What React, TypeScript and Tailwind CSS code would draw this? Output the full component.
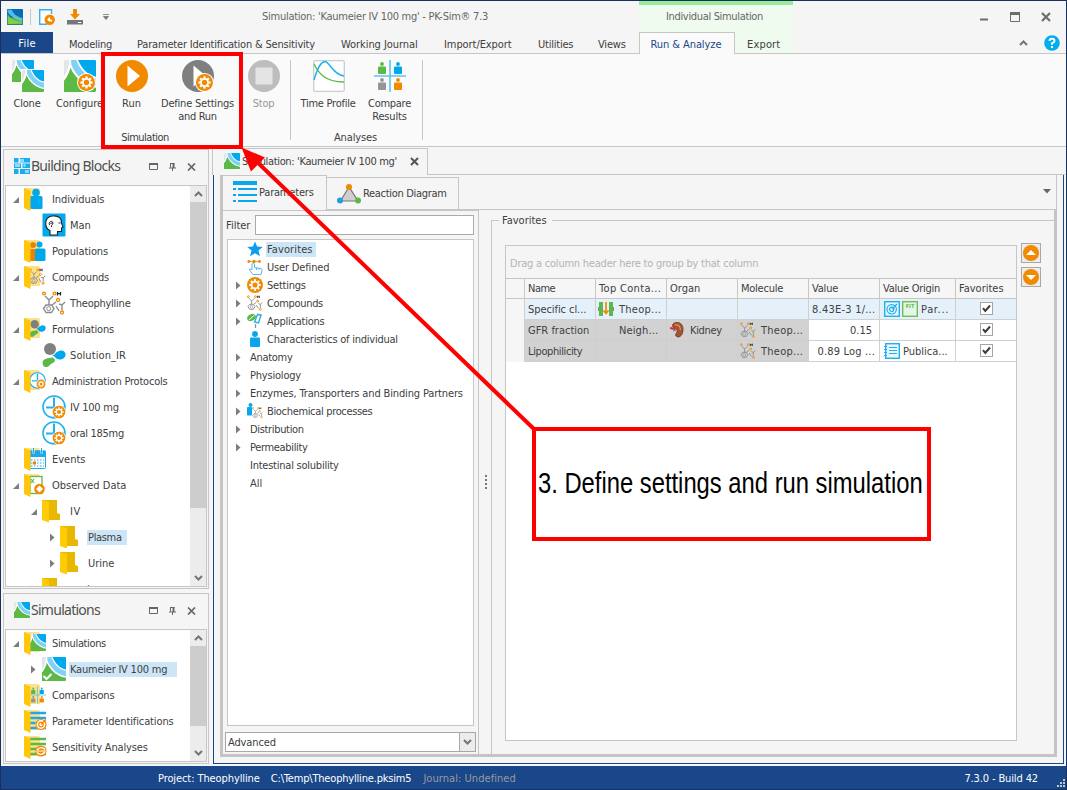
import { useLayoutEffect, useRef, type ReactNode } from "react";

/* Text that is tracked in or out so that it takes exactly `w` pixels. */
function T({ w, children, className = "" }: { w?: number; children: string; className?: string }) {
  const ref = useRef<HTMLSpanElement>(null);
  useLayoutEffect(() => {
    const el = ref.current;
    if (!el || !w) return;
    el.style.letterSpacing = "0px";
    const natural = el.offsetWidth;
    el.style.letterSpacing = `${(w - natural) / children.length}px`;
  }, [w, children]);
  return (
    <span ref={ref} className={`inline-block whitespace-nowrap ${className}`}>
      {children}
    </span>
  );
}

type P = { s?: number };

function Gear({ cx, cy, r }: { cx: number; cy: number; r: number }) {
  return (
    <g transform={`translate(${cx} ${cy}) scale(${r / 10})`}>
      <circle r="10" fill="#f18a00" />
      <circle r="4.2" fill="none" stroke="#fff" strokeWidth="2" />
      {[0, 45, 90, 135, 180, 225, 270, 315].map((a) => (
        <rect key={a} x="-1.3" y="-7.2" width="2.6" height="3" fill="#fff" transform={`rotate(${a})`} />
      ))}
    </g>
  );
}

function WaveShape() {
  return (
    <>
      <rect width="24" height="24" rx="1" fill="#fff" />
      <path d="M0 1Q0 0 1 0H4C3.800 4 2.500 9 0 12.500Z" fill="#e3e6e8" />
      <path d="M10.500 0H23Q24 0 24 1V12.500C18 11.500 13.500 7 10.500 0Z" fill="#00a9ee" />
      <path d="M5.200 0H9.200C12 7.500 17 12.500 24 13.800V19.300C16 18 9 12 5.600 4Z" fill="#80d0f7" />
      <path d="M0 24V15.500C2.500 12.500 4 9.500 4.800 5.800C9 14.500 16 19.800 24 20.800V23Q24 24 23 24Z" fill="#5cb946" />
    </>
  );
}

const SimIcon = ({ s = 24 }: P) => (
  <svg width={s} height={s} viewBox="0 0 24 24"><WaveShape /></svg>
);
const SimCheck = ({ s = 24 }: P) => (
  <svg width={s} height={s} viewBox="0 0 24 24"><WaveShape /><path d="M1.500 19L4.500 22L9.500 17" fill="none" stroke="#fff" strokeWidth="2" /></svg>
);
const AppIcon = () => (
  <svg width="16" height="16" viewBox="0 0 24 24">
    <rect width="24" height="24" rx="1" fill="#0a6cae" />
    <path d="M1 1H7C11 9 16 12 23 13V18C12 17 5 10 1 5Z" fill="#4cbdf0" />
    <path d="M1 7C4 14 12 18 23 19V23H1Z" fill="#6cc83c" />
    <path d="M1 12C5 14 9 14 12 11L23 16V20Q12 22 1 23Z" fill="#8fd650" opacity=".55" />
  </svg>
);
const CloneIcon = () => (
  <svg width="32" height="32" viewBox="0 0 32 32">
    <svg width="22" height="22" viewBox="0 0 24 24"><WaveShape /></svg>
    <rect x="9" y="9" width="23" height="23" fill="#fff" />
    <svg x="10" y="10" width="22" height="22" viewBox="0 0 24 24"><WaveShape /></svg>
  </svg>
);
const ConfigureIcon = () => (
  <svg width="32" height="32" viewBox="0 0 32 32">
    <svg width="32" height="32" viewBox="0 0 24 24"><WaveShape /></svg>
    <circle cx="22.500" cy="22.500" r="9.500" fill="#fff" />
    <Gear cx={22.5} cy={22.5} r={8.5} />
  </svg>
);
const RunIcon = () => (
  <svg width="32" height="32" viewBox="0 0 32 32">
    <circle cx="16" cy="16" r="16" fill="#f18a00" /><path d="M11.500 5.500L24 16L11.500 26.500Z" fill="#fff" />
  </svg>
);
const DefineRunIcon = () => (
  <svg width="32" height="32" viewBox="0 0 32 32">
    <circle cx="16" cy="16" r="16" fill="#7f7f7f" /><path d="M11.500 5.500L24 16L11.500 26.500Z" fill="#fff" />
    <circle cx="22.500" cy="22.500" r="9.500" fill="#fff" />
    <Gear cx={22.5} cy={22.5} r={8.5} />
  </svg>
);
const StopIcon = () => (
  <svg width="32" height="32" viewBox="0 0 32 32">
    <circle cx="16" cy="16" r="16" fill="#bdbdbd" /><rect x="7.500" y="7.500" width="17" height="17" rx="1" fill="#e4e4e4" stroke="#d2d2d2" />
  </svg>
);
const ProfileIcon = () => (
  <svg width="32" height="32" viewBox="0 0 32 32" fill="none">
    <rect x=".7" y=".7" width="30.600" height="30.600" rx="1.500" fill="#fff" stroke="#c9cdd1" strokeWidth="1.300" />
    <path d="M1 4C5 12 11 22 31 22" stroke="#5cb946" strokeWidth="1.400" />
    <path d="M1 20C4 10 7 2 12 1.500C17 2 19 14 31 16" stroke="#1fb0ee" strokeWidth="1.400" />
  </svg>
);
function Person({ x, y, c }: { x: number; y: number; c: string }) {
  return (
    <g transform={`translate(${x} ${y})`} fill={c}>
      <circle cx="4" cy="2" r="1.900" /><rect x="0" y="4.500" width="8" height="7.500" rx="1" />
    </g>
  );
}
function ComparePeople() {
  return (
    <>
      <Person x={4} y={2} c="#5cb946" /><Person x={20} y={2} c="#00a9ee" />
      <Person x={4} y={18} c="#939598" /><Person x={20} y={18} c="#f18a00" />
      <path d="M16 0V32M0 16H32" stroke="#5cc5f2" strokeWidth="1.600" />
    </>
  );
}
const CompareIcon = () => <svg width="32" height="32" viewBox="0 0 32 32"><ComparePeople /></svg>;

const ManIcon = () => (
  <svg width="24" height="24" viewBox="0 0 24 24">
    <rect x=".5" y=".5" width="23" height="23" rx="1" fill="#00a9ee" />
    <path d="M8 22V17.500C2 15 2 4 10 3C17 2 20 6 19.500 10L21 14L19.500 15V18.500H15.500V22Z" fill="#fff" stroke="#222" strokeWidth="1.100" />
    <path d="M7.500 12C6 8.500 10.500 7 11 10C11 12 9 11.500 9.500 14M8.500 10.500L10 10M16.500 10H18.500" fill="none" stroke="#222" strokeWidth="1" />
  </svg>
);
function Mol() {
  return (
    <>
      <g fill="none" stroke="#8d8d8d" strokeWidth="1.400">
        <path d="M3 5L7 9L11 5M7 9V14M1.500 17.500L4 14H9.500L12 17.500L9.500 21.500H4Z" />
        <circle cx="6.700" cy="17.700" r="2" strokeWidth="1" />
        <path d="M10 14L14 11M17 13L20 14L23 11M20 14V19M14 15L17 20" />
      </g>
      <g fill="none" stroke="#f18a00" strokeWidth="1.300"><circle cx="2" cy="2.500" r="1.400" /><circle cx="12.500" cy="2.500" r="1.400" /><circle cx="16" cy="9" r="1.500" /><circle cx="20" cy="21.500" r="1.500" /></g>
      <path d="M15.500 1V4.500M18.500 1V4.500M15.500 2.700H18.500" stroke="#222" strokeWidth="1.200" />
    </>
  );
}
const MolIcon = ({ s = 24 }: P) => <svg width={s} height={s} viewBox="0 0 24 24" className="shrink-0"><Mol /></svg>;

function Pill() {
  return (
    <>
      <circle cx="8" cy="6" r="6" fill="#7f7f7f" />
      <path d="M10 12C13 13 13 9 17 8C22 6 26 11 22 15C18 18 14 16 13 14Z" fill="#00a9ee" />
      <path d="M1 22C-1 17 4 15 8 15C11 14 12 15 13 17C13 20 9 20 7 23C4 25 2 24 1 22Z" fill="#5cb946" />
    </>
  );
}
function Clock() {
  return (
    <>
      <circle cx="12" cy="12" r="11" fill="#fff" stroke="#1fb0ee" strokeWidth="1.600" />
      <path d="M12 2.500V12.500H4" fill="none" stroke="#1fb0ee" strokeWidth="2" />
      <path d="M12 20V22M20 12H22" stroke="#1fb0ee" strokeWidth="1.500" />
      <circle cx="17" cy="17" r="7" fill="#fff" /><Gear cx={17} cy={17} r={6.3} />
    </>
  );
}
const PillIcon = () => <svg width="24" height="24" viewBox="0 0 24 24"><Pill /></svg>;
const ClockIcon = () => <svg width="24" height="24" viewBox="0 0 24 24"><Clock /></svg>;

/* Open yellow folder that shows a smaller drawing in front of its back page. */
function Folder({ children }: { children: ReactNode }) {
  return (
    <svg width="24" height="24" viewBox="0 0 24 24" className="overflow-visible">
      <path d="M0 1H14Q16 1 16 3V21H0Z" fill="#ffe08a" />
      {children}
      <path d="M0 1L6.500 3.500V24L0 21Z" fill="#ffc60a" />
    </svg>
  );
}
const Inner = ({ children }: { children: ReactNode }) => (
  <svg x="5" y="2.500" width="17" height="18" viewBox="0 0 24 24" overflow="visible">{children}</svg>
);
const PlainFolder = () => (
  <svg width="24" height="24" viewBox="0 0 24 24">
    <path d="M0 1H15V14L18 15V21H0Z" fill="#e8b800" /><path d="M0 1L7 3V23.500L0 21Z" fill="#ffcb05" />
  </svg>
);
const FIndividual = () => <Folder><circle cx="12" cy="5.500" r="3.800" fill="#00a9ee" /><rect x="6" y="9" width="12.500" height="13" rx="1.500" fill="#00a9ee" /></Folder>;
const FPopulation = () => (
  <Folder>
    <circle cx="9" cy="6" r="3" fill="#f08000" /><rect x="5" y="10" width="7" height="12" fill="#f08000" />
    <circle cx="15.500" cy="5.500" r="3" fill="#00a9ee" /><rect x="11" y="9.500" width="10.500" height="12.500" rx="1.500" fill="#00a9ee" />
  </Folder>
);
const FCompound = () => <Folder><Inner><Mol /></Inner></Folder>;
const FFormulation = () => <Folder><Inner><Pill /></Inner></Folder>;
const FProtocol = () => <Folder><Inner><Clock /></Inner></Folder>;
const FEvent = () => (
  <Folder>
    <rect x="6" y="4" width="15.500" height="17.500" rx="1" fill="#fff" stroke="#1fa8e8" />
    <path d="M6 3.500H21.500V10H6Z" fill="#1fa8e8" /><path d="M9.500 2V6.500M17.500 2V6.500" stroke="#fff" strokeWidth="2" /><path d="M9.500 1V6M17.500 1V6" stroke="#1fa8e8" />
    <path d="M7 13H20M7 16H20M7 19H20" stroke="#6cc8f2" strokeWidth="1.500" strokeDasharray="1.500 1.500" /><rect x="9" y="14.500" width="3" height="3" fill="#f08000" />
  </Folder>
);
function Observed() {
  return (
    <>
      <rect x="6" y="3.500" width="12" height="17" fill="#fff" stroke="#5cb946" strokeWidth="1.300" />
      <path d="M7 6L10 10M10 6L7 10" stroke="#5cb946" strokeWidth="1.200" />
      <circle cx="15.500" cy="16" r="5.300" fill="#f18a00" />
      <path d="M15.500 12.500L19 16L15.500 19.500L12 16Z" fill="#fff" />
    </>
  );
}
const FObserved = () => <Folder><Observed /></Folder>;
const FSim = () => <Folder><Inner><WaveShape /></Inner></Folder>;
const FCompare = () => (
  <Folder><svg x="5" y="3" width="17" height="18" viewBox="0 0 32 32"><ComparePeople /></svg></Folder>
);
function Lines({ c }: { c: string }) {
  return <path d="M6 4H22M6 9H22M6 14H22M6 19H22" stroke={c} strokeWidth="2.600" />;
}
const FIdent = () => (
  <Folder>
    <Lines c="#1fa8e8" /><circle cx="17" cy="15.500" r="5.600" fill="#fff" />
    <g fill="none" stroke="#f18a00" strokeWidth="1.200"><circle cx="17" cy="15.500" r="5" /><circle cx="17" cy="15.500" r="2.300" /><path d="M17 15.500L22 10.500" /></g>
  </Folder>
);
const FSens = () => (
  <Folder>
    <Lines c="#5cb946" /><circle cx="17" cy="16" r="5.600" fill="#f18a00" />
    <path d="M13 15Q17 10.500 21 14.500M13 17.500Q17 21.500 21 17" fill="none" stroke="#fff" strokeWidth="1.400" /><path d="M12 16H22" stroke="#fff" />
  </Folder>
);
const BlocksIcon = () => (
  <svg width="16" height="16" viewBox="0 0 16 16">
    <g fill="#16aeef"><rect width="4.500" height="4.500" /><rect x="6" width="10" height="4.500" /><rect y="5.500" width="7" height="4.500" /><rect x="8.500" y="5.500" width="7.500" height="4.500" /><rect y="11" width="4.500" height="5" /><rect x="6" y="11" width="10" height="5" /></g>
    <g fill="#8fdafa"><rect x="6" y="1" width="4" height="3" /><rect x="1" y="6" width="5" height="3" /><rect x="9.500" y="6" width="2" height="3" /><rect x="11" y="12" width="4" height="3" /></g>
  </svg>
);
const ParamIcon = () => (
  <svg width="24" height="24" viewBox="0 0 24 24" className="shrink-0">
    <path d="M0 1H24V5H0ZM5 8H24V10H5ZM5 14H24V16H5ZM5 20H24V22H5ZM0 8H3V10H0ZM0 14H3V16H0ZM0 20H3V22H0Z" fill="#0aa6ec" />
  </svg>
);
const DiagramIcon = () => (
  <svg width="24" height="24" viewBox="0 0 24 24" className="shrink-0">
    <path d="M12 5L3.500 19H21Z" fill="#cfcfcf" stroke="#777" strokeWidth="1.200" />
    <circle cx="12" cy="5" r="3" fill="#f18a00" /><circle cx="3" cy="18.500" r="3" fill="#1f9fe0" /><circle cx="21" cy="18.500" r="3" fill="#5cb946" />
  </svg>
);
const Star = () => <svg width="16" height="16" viewBox="0 0 16 16"><path d="M8 .5L10.100 5.500L15.800 6L11.500 9.600L12.900 15.200L8 12.200L3.100 15.200L4.500 9.600L.2 6L5.900 5.500Z" fill="#0f9fe8" /></svg>;
const Hand = () => (
  <svg width="16" height="16" viewBox="0 0 16 16" fill="none">
    <path d="M1 2.500H13" stroke="#f3a850" strokeWidth="1.200" /><g fill="#f18a00"><circle cx="1.800" cy="2.500" r="1.400" /><circle cx="7" cy="2.500" r="1.700" /><circle cx="12.500" cy="2.500" r="1.400" /></g>
    <path d="M6 15.500L2.500 11Q2 9 5 10.500V5Q6.500 3.500 7.500 5V8.500L14 9.500Q15.500 10 15 12L14 15.500Z" fill="#fff" stroke="#55bdf0" /><path d="M9.500 9V11M12 9.500V11" stroke="#55bdf0" />
  </svg>
);
const GearIcon = () => <svg width="16" height="16" viewBox="0 0 16 16"><Gear cx={8} cy={8} r={8} /></svg>;
const AppsIcon = () => (
  <svg width="16" height="16" viewBox="0 0 16 16">
    <ellipse cx="4.500" cy="4.500" rx="4.500" ry="3.200" fill="#5cb946" transform="rotate(-25 4.500 4.500)" /><path d="M2 7L7.500 2" stroke="#fff" />
    <path d="M10.500 1.500L14 2L11.500 10L7.500 9Z" fill="#fff" stroke="#1fb0ee" strokeWidth="1.400" /><path d="M8.500 11V15M10.500 1L14.500 2.500" stroke="#8d9499" strokeWidth="1.300" />
  </svg>
);
const PersonIcon = () => <svg width="16" height="16" viewBox="0 0 16 16" fill="#0aa6ec"><circle cx="8" cy="3" r="2.900" /><rect x="3" y="6.500" width="10" height="9.500" rx="1" /></svg>;
const BioIcon = () => (
  <svg width="16" height="16" viewBox="0 0 16 16">
    <circle cx="3.500" cy="2" r="2" fill="#0aa6ec" /><rect x="0" y="4" width="5" height="8.500" rx=".8" fill="#0aa6ec" />
    <svg x="5" y="4" width="11.500" height="11.500" viewBox="0 0 24 24"><Mol /></svg>
  </svg>
);
const TransportIcon = () => (
  <svg width="16" height="16" viewBox="0 0 16 16" className="shrink-0">
    <path d="M0 6H16V10H0Z" fill="#8a8a8a" /><path d="M1 1H5V6L4 8L5 10V15H1ZM11 1H15V15H11V10L12 8L11 6Z" fill="#5cb946" /><rect x="5" y="1" width="6" height="14" fill="#e6f2fc" />
    <path d="M8 1V12M5.500 9.500L8 12.500L10.500 9.500" fill="none" stroke="#f18a00" strokeWidth="1.700" />
  </svg>
);
const Kidney = () => (
  <svg width="16" height="16" viewBox="0 0 16 16" className="shrink-0">
    <path d="M3 2C6-1 13 0 13 7C13 13 10 16 6.500 14.500C4 13 8 10 7 8C6 6 1 6 3 2Z" fill="#a55430" stroke="#713014" strokeWidth=".8" /><path d="M5 3Q10 2 10.500 8" fill="none" stroke="#d59070" strokeWidth="1.300" />
    <path d="M0 6L5 7" stroke="#e22" strokeWidth="2" /><path d="M3 9L6 8" stroke="#5577cc" />
  </svg>
);
const TargetIcon = () => (
  <svg width="16" height="16" viewBox="0 0 16 16" className="shrink-0" fill="none" stroke="#1fb0ee">
    <rect x=".7" y=".7" width="14.600" height="14.600" fill="#e8f6fd" strokeWidth="1.400" /><circle cx="7.700" cy="8.300" r="4.700" strokeWidth="1.200" /><circle cx="7.700" cy="8.300" r="2.200" strokeWidth="1.200" /><path d="M8 8L13 3" strokeWidth="1.200" />
  </svg>
);
const FitIcon = () => (
  <svg width="16" height="16" viewBox="0 0 16 16" className="shrink-0">
    <rect x=".7" y=".7" width="14.600" height="14.600" fill="#e6f6e4" stroke="#6cc05a" strokeWidth="1.400" />
    <text x="8" y="6.800" fontSize="5" fontWeight="bold" fill="#5cb946" textAnchor="middle" fontFamily="DejaVu Sans">FIT</text>
  </svg>
);
const BookIcon = () => (
  <svg width="16" height="16" viewBox="0 0 16 16" className="shrink-0" fill="none" stroke="#1fb0ee">
    <rect x="1.700" y=".7" width="13.600" height="14.600" fill="#e8f6fd" strokeWidth="1.400" /><path d="M5 4.500H13M5 7.500H13M5 10.500H13M0 3.500H3M0 6.500H3M0 9.500H3M0 12.500H3" strokeWidth="1.100" />
  </svg>
);
const Check = () => (
  <svg width="13" height="13" viewBox="0 0 13 13" className="-mt-px"><rect x=".5" y=".5" width="12" height="12" fill="#fff" stroke="#a5a5a5" /><path d="M3 6.200L5.300 9L10 3.500" fill="none" stroke="#3c3c3c" strokeWidth="2" /></svg>
);

function Twisty({ state }: { state?: "open" | "closed" }) {
  return (
    <span className="w-[11px] shrink-0">
      {state === "open" && <svg width="7" height="7" viewBox="0 0 7 7" className="mt-[3px]"><path d="M6 0V6H0Z" fill="#7d7d7d" /></svg>}
      {state === "closed" && <svg width="5" height="9" viewBox="0 0 5 9" className="mt-px"><path d="M0 .5L4.500 4.500L0 8.500Z" fill="#7d7d7d" /></svg>}
    </span>
  );
}

type Node = { t: string; w: number; lv: 0 | 1 | 2; Icon: () => ReactNode; st?: "open" | "closed"; hl?: number };
const SimNode = () => <SimCheck />;
const MolNode = () => <MolIcon />;
const blocks: Node[] = [
  { t: "Individuals", w: 52, lv: 0, Icon: FIndividual, st: "open" },
  { t: "Man", w: 21, lv: 1, Icon: ManIcon },
  { t: "Populations", w: 56, lv: 0, Icon: FPopulation },
  { t: "Compounds", w: 57, lv: 0, Icon: FCompound, st: "open" },
  { t: "Theophylline", w: 61, lv: 1, Icon: MolNode },
  { t: "Formulations", w: 62, lv: 0, Icon: FFormulation, st: "open" },
  { t: "Solution_IR", w: 56, lv: 1, Icon: PillIcon },
  { t: "Administration Protocols", w: 116, lv: 0, Icon: FProtocol, st: "open" },
  { t: "IV 100 mg", w: 49, lv: 1, Icon: ClockIcon },
  { t: "oral 185mg", w: 54, lv: 1, Icon: ClockIcon },
  { t: "Events", w: 34, lv: 0, Icon: FEvent },
  { t: "Observed Data", w: 74, lv: 0, Icon: FObserved, st: "open" },
  { t: "IV", w: 11, lv: 1, Icon: PlainFolder, st: "open" },
  { t: "Plasma", w: 34, lv: 2, Icon: PlainFolder, st: "closed", hl: 40 },
  { t: "Urine", w: 26, lv: 2, Icon: PlainFolder, st: "closed" },
  { t: "oral", w: 20, lv: 1, Icon: PlainFolder, st: "closed" },
];
const sims: Node[] = [
  { t: "Simulations", w: 54, lv: 0, Icon: FSim, st: "open" },
  { t: "Kaumeier IV 100 mg", w: 97, lv: 1, Icon: SimNode, st: "closed", hl: 108 },
  { t: "Comparisons", w: 62, lv: 0, Icon: FCompare },
  { t: "Parameter Identifications", w: 122, lv: 0, Icon: FIdent },
  { t: "Sensitivity Analyses", w: 96, lv: 0, Icon: FSens },
];
const indent = ["pl-[7px]", "pl-[25px]", "pl-[44px]"];

function Tree({ nodes }: { nodes: Node[] }) {
  return (
    <div className="min-w-0 flex-1 overflow-hidden bg-white">
      {nodes.map((n, i) => (
        <div key={i} className={`flex h-[26px] items-center ${indent[n.lv]}`}>
          <Twisty state={n.st} />
          <span className={n.lv === 2 ? "-ml-px w-6 shrink-0" : "w-6 shrink-0"}><n.Icon /></span>
          <span className={`ml-[3px] flex h-[15px] shrink-0 items-center pl-px ${n.hl ? "bg-[#cde6f7]" : ""}`} style={n.hl ? { width: n.hl } : undefined}>
            <T w={n.w}>{n.t}</T>
          </span>
        </div>
      ))}
    </div>
  );
}

const Chev = ({ up = false }: { up?: boolean }) => (
  <svg width="9" height="6" viewBox="0 0 9 6"><path d={up ? "M1 5L4.500 1.500L8 5" : "M1 1L4.500 4.500L8 1"} fill="none" stroke="#757575" strokeWidth="2" /></svg>
);

function ScrollBar({ thumb }: { thumb: string }) {
  return (
    <div className="flex w-4 shrink-0 flex-col bg-[#ececec]">
      <div className="flex h-4 items-center justify-center"><Chev up /></div>
      <div className={`bg-[#cdcdcd] ${thumb}`} />
      <div className="mt-auto flex h-4 items-center justify-center"><Chev /></div>
    </div>
  );
}

function Panel({ title, w, icon, nodes, className, thumb }: { title: string; w: number; icon: ReactNode; nodes: Node[]; className: string; thumb: string }) {
  return (
    <section className={`flex w-[206px] flex-col border border-[#c6c6c6] px-px pb-px ${className}`}>
      <header className="flex h-[35px] shrink-0 items-center pb-[3px] pl-[9px]">
        {icon}
        <T w={w} className="ml-px font-['Noto_Sans'] text-[14px] leading-5 text-[#505050]">{title}</T>
        <div className="ml-auto flex items-center gap-[10px] pr-[11px] pt-[2px]">
          <svg width="9" height="8" viewBox="0 0 9 8" className="mr-px"><path d="M.5 1V6.500H8.500V1" fill="none" stroke="#666" /><path d="M0 1H9" stroke="#666" strokeWidth="2" /></svg>
          <svg width="7" height="8" viewBox="0 0 7 8" className="mr-px"><path d="M1.500 0V4.500M0 5H7M3.500 5V8M1 .5H5.500" stroke="#666" fill="none" /><path d="M4.500 0V5" stroke="#666" strokeWidth="2" /></svg>
          <svg width="9" height="8" viewBox="0 0 9 8"><path d="M1 .5L8 7.500M8 .5L1 7.500" stroke="#666" strokeWidth="1.700" /></svg>
        </div>
      </header>
      <div className="flex min-h-0 flex-1 border border-[#c6c6c6]">
        <Tree nodes={nodes} />
        <ScrollBar thumb={thumb} />
      </div>
    </section>
  );
}

function RibbonButton({ icon, lines, className, muted }: { icon: ReactNode; lines: [string, number][]; className: string; muted?: boolean }) {
  return (
    <div className={`flex shrink-0 flex-col items-center ${className} ${muted ? "text-[#999]" : ""}`}>
      <span className="mb-[5px] h-8 pl-px">{icon}</span>
      {lines.map(([t, w]) => <T key={t} w={w}>{t}</T>)}
    </div>
  );
}

const params: { t: string; w: number; Icon?: () => ReactNode; c?: boolean; hl?: boolean }[] = [
  { t: "Favorites", w: 46, Icon: Star, hl: true },
  { t: "User Defined", w: 62, Icon: Hand },
  { t: "Settings", w: 39, Icon: GearIcon, c: true },
  { t: "Compounds", w: 56, Icon: () => <MolIcon s={16} />, c: true },
  { t: "Applications", w: 57, Icon: AppsIcon, c: true },
  { t: "Characteristics of individual", w: 131, Icon: PersonIcon },
  { t: "Anatomy", w: 43, c: true },
  { t: "Physiology", w: 51, c: true },
  { t: "Enzymes, Transporters and Binding Partners", w: 213, c: true },
  { t: "Biochemical processes", w: 105, Icon: BioIcon, c: true },
  { t: "Distribution", w: 54, c: true },
  { t: "Permeability", w: 58, c: true },
  { t: "Intestinal solubility", w: 89 },
  { t: "All", w: 12 },
];

const cols = "grid grid-cols-[18px_71px_71px_71px_71px_71px_76px_61px]";

const Arrow = ({ down = false }: { down?: boolean }) => (
  <div className="flex size-5 items-center justify-center border border-[#a8a8a8] bg-[#ececec]">
    <svg width="16" height="16" viewBox="0 0 16 16"><circle cx="8" cy="8" r="8" fill="#f18a00" /><path d={down ? "M3 6H13L8 11Z" : "M3 10H13L8 5Z"} fill="#fff" /></svg>
  </div>
);

function Grid() {
  const h = "flex items-center border-l border-[#c6c6c6] pl-[3px]";
  const c = "flex items-center overflow-hidden border-l border-b border-[#d0d0d0]";
  const g = "flex items-center overflow-hidden border-l border-b border-[#cecece] bg-[#d2d2d2]";
  return (
    <div className="flex h-[496px] w-[512px] flex-col border border-[#c6c6c6] bg-white">
      <div className="flex h-8 shrink-0 items-center bg-[#f5f5f5] pl-[4px] pt-[2px] text-[#b4b4b4]">
        <T w={248}>Drag a column header here to group by that column</T>
      </div>
      <div className={`${cols} h-[21px] shrink-0 border-y border-[#c6c6c6] bg-[#f6f6f6]`}>
        <span />
        <div className={h}><T w={27}>Name</T></div><div className={h}><T w={62}>Top Conta...</T></div><div className={h}><T w={30}>Organ</T></div>
        <div className={h}><T w={42}>Molecule</T></div><div className={h}><T w={26}>Value</T></div><div className={h}><T w={57}>Value Origin</T></div><div className={h}><T w={45}>Favorites</T></div>
      </div>
      <div className={`${cols} h-[21px] shrink-0 bg-[#e4f1fb]`}>
        <span className="bg-[#f6f6f6]" />
        <div className={`${c} pl-[3px]`}><T w={58}>Specific cl...</T></div>
        <div className={`${c} gap-[5px] pl-[2px]`}><TransportIcon /><T w={42}>Theop...</T></div>
        <div className={c} /><div className={c} />
        <div className={`${c} pl-[3px]`}><T w={63}>8.43E-3 1/...</T></div>
        <div className={`${c} gap-[2px] pl-[4px]`}><TargetIcon /><FitIcon /><T w={28} className="ml-px">Par...</T></div>
        <div className={`${c} justify-center`}><Check /></div>
      </div>
      <div className={`${cols} h-[21px] shrink-0`}>
        <span className="bg-[#f6f6f6]" />
        <div className={`${g} pl-[3px]`}><T w={61}>GFR fraction</T></div>
        <div className={`${g} pl-[23px]`}><T w={39}>Neigh...</T></div>
        <div className={`${g} gap-[4px] pl-[3px]`}><Kidney /><T w={32}>Kidney</T></div>
        <div className={`${g} gap-[5px] pl-[2px]`}><MolIcon s={16} /><T w={42}>Theop...</T></div>
        <div className={`${c} justify-end pr-[7px]`}><T w={22}>0.15</T></div>
        <div className={c} />
        <div className={`${c} justify-center`}><Check /></div>
      </div>
      <div className={`${cols} h-[21px] shrink-0`}>
        <span className="bg-[#f6f6f6]" />
        <div className={`${g} pl-[3px]`}><T w={54}>Lipophilicity</T></div>
        <div className={g} /><div className={g} />
        <div className={`${g} gap-[5px] pl-[2px]`}><MolIcon s={16} /><T w={42}>Theop...</T></div>
        <div className={`${c} justify-end pr-[4px]`}><T w={57}>0.89 Log ...</T></div>
        <div className={`${c} gap-[3px] pl-[4px]`}><BookIcon /><T w={45}>Publica...</T></div>
        <div className={`${c} justify-center`}><Check /></div>
      </div>
    </div>
  );
}

export default function App() {
  return (
    <div className="relative flex h-[790px] w-[1067px] flex-col overflow-hidden border border-[#17305e] bg-[#f5f5f5] font-['DejaVu_Sans_Condensed','DejaVu_Sans',sans-serif] text-[11px] leading-[13px] text-[#404040]">
      {/* Title bar */}
      <div className="flex h-[31px] shrink-0">
        <div className="flex w-[255px] items-center pl-[6px]">
          <AppIcon />
          <span className="ml-[7px] h-4 w-px bg-[#c6c6c6]" />
          <svg width="16" height="16" viewBox="0 0 16 16" className="ml-[8px]"><path d="M12.500 5V.7H.7V15.300H8" fill="#fff" stroke="#35b2ea" strokeWidth="1.400" /><circle cx="10.700" cy="10.700" r="5.200" fill="#f18a00" /><path d="M8.500 10.500L10.500 8.500V12.500ZM10 10.500Q13.500 10 12.500 13" fill="#fff" stroke="#fff" strokeWidth=".8" /></svg>
          <svg width="16" height="16" viewBox="0 0 16 16" className="ml-[12px]"><path d="M6 0H10V5H13L8 10.500L3 5H6Z" fill="#f18a00" /><rect y="11" width="16" height="4.500" fill="#777" /><path d="M11 13.500H14" stroke="#fff" /></svg>
          <svg width="6" height="6" viewBox="0 0 6 6" className="ml-[20px]"><path d="M0 .5H6M.5 2.500H5.500L3 5.500Z" fill="#777" stroke="#777" strokeWidth=".8" /></svg>
        </div>
        <div className="flex w-[383px] items-center pl-[6px] text-[#666]"><T w={226}>Simulation: 'Kaumeier IV 100 mg' - PK-Sim® 7.3</T></div>
        <div className="flex w-[154px] items-center justify-center border-t-4 border-[#98ec98] bg-[#effbef] pb-[5px] pr-[3px] text-[#666]"><T w={97}>Individual Simulation</T></div>
        <div className="ml-auto flex items-center gap-[21px] pr-[15px]">
          <svg width="9" height="10" viewBox="0 0 9 10"><path d="M0 7.500H8" stroke="#6d6d6d" strokeWidth="2" /></svg>
          <svg width="10" height="10" viewBox="0 0 10 10"><path d="M.5 1V9.500H9.500V1" fill="none" stroke="#6d6d6d" /><path d="M0 1.500H10" stroke="#6d6d6d" strokeWidth="3" /></svg>
          <svg width="10" height="10" viewBox="0 0 10 10"><path d="M1 1L9 9M9 1L1 9" stroke="#6d6d6d" strokeWidth="2.200" /></svg>
        </div>
      </div>
      {/* Ribbon tabs */}
      <nav className="flex h-[22px] shrink-0 border-b border-[#c6c6c6]">
        <div className="mr-4 flex w-[52px] items-center justify-center bg-[#194789] pt-px text-white"><T w={17}>File</T></div>
        <div className="flex w-[68px] items-center pt-[3px]"><T w={43}>Modeling</T></div>
        <div className="flex w-[204px] items-center pt-[3px]"><T w={178}>Parameter Identification &amp; Sensitivity</T></div>
        <div className="flex w-[103px] items-center pt-[3px]"><T w={77}>Working Journal</T></div>
        <div className="flex w-[94px] items-center pt-[3px]"><T w={68}>Import/Export</T></div>
        <div className="flex w-[60px] items-center pt-[3px]"><T w={35}>Utilities</T></div>
        <div className="flex w-[41px] items-center pt-[3px]"><T w={28}>Views</T></div>
        <div className="-mb-px flex h-[22px] w-[96px] items-center justify-center border-x border-t border-[#c6c6c6] bg-[#fafafa] pr-[2px] pt-[2px] text-[#194789]"><T w={71}>Run &amp; Analyze</T></div>
        <div className="flex w-[58px] items-center pl-3 bg-[#effbef] pt-[3px]"><T w={33}>Export</T></div>
        <div className="ml-auto flex items-center gap-[16px] pr-[6px]">
          <Chev up />
          <svg width="16" height="16" viewBox="0 0 16 16"><circle cx="8" cy="8" r="7.800" fill="#00aeef" /><path d="M5.500 6Q5.500 3.700 8 3.700T10.500 6Q10.500 7.300 8 8.200V9.700" fill="none" stroke="#fff" strokeWidth="1.900" /><rect x="7" y="11" width="2" height="2" fill="#fff" /></svg>
        </div>
      </nav>
      {/* Ribbon */}
      <div className="flex h-[93px] shrink-0 border-b border-[#c6c6c6] bg-[#fafafa] pt-[6px]">
        <div className="flex w-[290px] flex-col justify-between">
          <div className="flex">
            <RibbonButton className="w-[52px]" icon={<CloneIcon />} lines={[["Clone", 27]]} />
            <RibbonButton className="w-[53px]" icon={<ConfigureIcon />} lines={[["Configure", 47]]} />
            <RibbonButton className="w-[51px]" icon={<RunIcon />} lines={[["Run", 19]]} />
            <RibbonButton className="w-[81px]" icon={<DefineRunIcon />} lines={[["Define Settings", 73], ["and Run", 39]]} />
            <RibbonButton className="w-[51px]" icon={<StopIcon />} lines={[["Stop", 22]]} muted />
          </div>
          <div className="mb-[2px] pr-[2px] text-center"><T w={48}>Simulation</T></div>
        </div>
        <div className="-ml-px h-20 w-px bg-[#c6c6c6]" />
        <div className="flex w-[131px] flex-col justify-between">
          <div className="flex pl-[7px]">
            <RibbonButton className="w-[60px]" icon={<ProfileIcon />} lines={[["Time Profile", 55]]} />
            <RibbonButton className="w-[63px]" icon={<CompareIcon />} lines={[["Compare", 43], ["Results", 35]]} />
          </div>
          <div className="mb-[2px] pr-[2px] text-center"><T w={43}>Analyses</T></div>
        </div>
        <div className="h-20 w-px bg-[#c6c6c6]" />
      </div>
      {/* Docking area */}
      <main className="flex h-[619px] shrink-0">
        <aside className="flex w-[208px] flex-col pl-[2px] pt-[2px]">
          <Panel title="Building Blocks" w={89} icon={<BlocksIcon />} nodes={blocks} className="h-[440px]" thumb="h-[306px]" />
          <Panel title="Simulations" w={69} icon={<SimIcon s={16} />} nodes={sims} className="mt-1 h-[171px]" thumb="h-[80px]" />
        </aside>
        <div className="ml-[3px] flex w-[853px] flex-col pt-px">
          <div className="flex h-[27px] shrink-0">
            <div className="flex w-[216px] items-center border-x border-t border-[#c6c6c6] pb-[2px] pl-[11px]">
              <SimIcon s={16} />
              <T w={155} className="ml-[2px]">Simulation: 'Kaumeier IV 100 mg'</T>
              <svg width="9" height="9" viewBox="0 0 9 9" className="ml-[13px]"><path d="M1 1L8 8M8 1L1 8" stroke="#555" strokeWidth="2" /></svg>
            </div>
            <div className="flex-1 border-b border-[#c6c6c6]" />
          </div>
          <div className="ml-px flex h-[589px] w-[851px] flex-col border-x border-b border-[#194789] px-[6px] pb-[6px]">
            <div className="flex min-h-0 flex-1 flex-col border-l-3 border-[#c4c4c4]">
              <div className="flex h-[35px] shrink-0 border-r border-[#c6c6c6]">
                <div className="flex w-[104px] items-center border-r border-t border-[#c6c6c6] pb-[2px] pl-[10px]">
                  <ParamIcon /><T w={55} className="ml-[2px]">Parameters</T>
                </div>
                <div className="mt-[2px] flex w-[132px] items-center border-b border-r border-t border-[#c6c6c6] pl-[10px]">
                  <DiagramIcon /><T w={84} className="ml-[2px]">Reaction Diagram</T>
                </div>
                <div className="flex flex-1 items-center justify-end border-b border-[#c6c6c6] pr-[5px]">
                  <svg width="8" height="5" viewBox="0 0 8 5" className="-mt-[1px]"><path d="M0 0H8L4 4.500Z" fill="#666" /></svg>
                </div>
              </div>
              <div className="flex min-h-0 flex-1 border-b-3 border-r-3 border-[#c4c4c4]">
                <div className="flex w-[256px] flex-col border-r border-t border-[#c6c6c6] pl-[2px] pt-[4px]">
                  <div className="flex h-5 shrink-0 items-center">
                    <T w={24} className="ml-px">Filter</T>
                    <div className="ml-[5px] h-5 w-[219px] border border-[#ababab] bg-white" />
                  </div>
                  <div className="ml-[2px] mt-1 h-[487px] w-[247px] shrink-0 border border-[#c6c6c6] bg-white">
                    {params.map((p) => (
                      <div key={p.t} className="flex h-[18px] items-center pl-[8px]">
                        <Twisty state={p.c ? "closed" : undefined} />
                        {p.Icon && <span className="w-4 shrink-0"><p.Icon /></span>}
                        <span className={`flex h-[15px] items-center ${p.Icon ? "ml-[3px] pl-px" : "ml-[3px]"} ${p.hl ? "w-[50px] bg-[#cde6f7]" : ""}`}>
                          <T w={p.w}>{p.t}</T>
                        </span>
                      </div>
                    ))}
                  </div>
                  <div className="mt-[6px] flex h-5 w-[251px] shrink-0 border border-[#a8a8a8] bg-white">
                    <div className="flex flex-1 items-center pl-[2px]"><T w={48}>Advanced</T></div>
                    <div className="flex w-4 items-center justify-center border-l border-[#a8a8a8] bg-[#ececec]"><Chev /></div>
                  </div>
                </div>
                <div className="flex w-3 flex-col items-center justify-center gap-[2px] pl-px">
                  {[0, 1, 2, 3].map((i) => <span key={i} className="size-[2px] bg-[#777]" />)}
                </div>
                <div className="flex flex-1 flex-col">
                  <div className="flex h-[21px] shrink-0 items-center">
                    <span className="h-px w-[8px] bg-[#c6c6c6]" /><T w={45} className="ml-[3px]">Favorites</T><span className="ml-[5px] h-px flex-1 bg-[#c6c6c6]" />
                  </div>
                  <div className="-mt-[10px] flex flex-1 items-start border-l border-[#c6c6c6] pl-[13px] pt-[24px]">
                    <Grid />
                    <div className="-mt-[2px] ml-1 flex flex-col gap-1"><Arrow /><Arrow down /></div>
                  </div>
                </div>
              </div>
            </div>
          </div>
        </div>
      </main>
      {/* Status bar */}
      <footer className="flex flex-1 items-center bg-[#194789] pt-px text-white">
        <T w={102} className="ml-[157px]">Project: Theophylline</T>
        <T w={141} className="ml-[11px]">C:\Temp\Theophylline.pksim5</T>
        <T w={92} className="ml-[12px] text-[#9a9a9a]">Journal: Undefined</T>
        <T w={74} className="ml-auto">7.3.0 - Build 42</T>
        <svg width="8" height="8" viewBox="0 0 8 8" className="ml-[19px] mr-px mt-[10px]"><path d="M6 0H8V2H6ZM3 3H5V5H3ZM6 3H8V5H6ZM0 6H2V8H0ZM3 6H5V8H3ZM6 6H8V8H6Z" fill="#c6c6c6" /></svg>
      </footer>

      {/* Callout */}
      <div className="absolute left-[100px] top-[51px] h-[97px] w-[142px] border-4 border-[#f00]" />
      <svg width="300" height="286" viewBox="0 0 300 286" className="absolute left-[239px] top-[145px]">
        <path d="M12 11L295 284" stroke="#f00" strokeWidth="4" /><path d="M1.500 1.500L25 11.500L11 25.500Z" fill="#f00" />
      </svg>
      <div className="absolute left-[531px] top-[426px] flex h-[114px] w-[399px] items-center border-4 border-[#f00] bg-white pb-[3px]">
        <T w={469} className="ml-[2px] origin-left scale-x-[.82] font-['Liberation_Sans'] text-[29px] leading-8 text-black">3. Define settings and run simulation</T>
      </div>
    </div>
  );
}
